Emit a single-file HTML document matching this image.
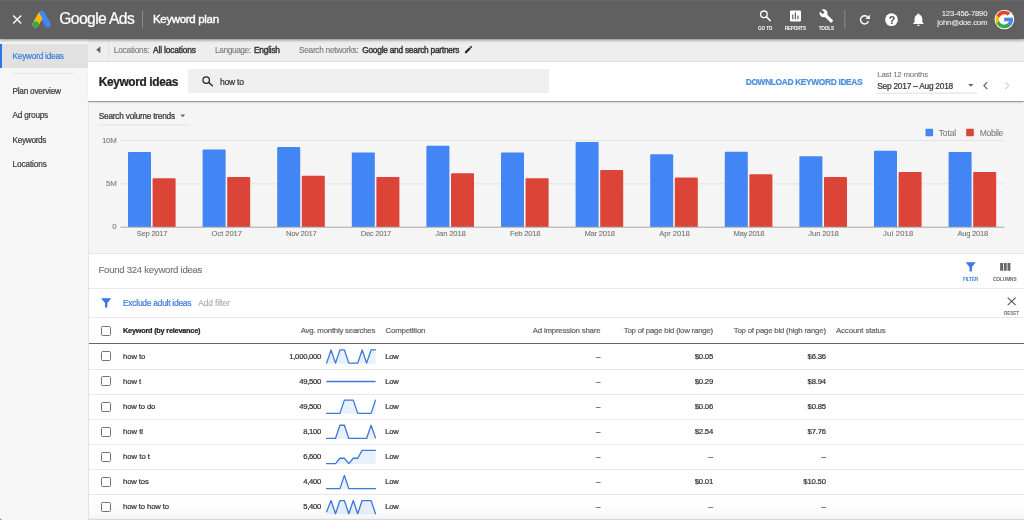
<!DOCTYPE html>
<html lang="en">
<head>
<meta charset="utf-8">
<title>Keyword plan - Google Ads</title>
<style>
*{box-sizing:border-box;margin:0;padding:0}
html,body{width:1024px;height:520px;overflow:hidden;background:#f5f5f5}
body{position:relative;font-family:"Liberation Sans",sans-serif;color:#333}
.abs{position:absolute}
.t{position:absolute;white-space:nowrap;line-height:14px;height:14px;-webkit-text-stroke:.22px currentColor}
#hdr{position:absolute;left:0;top:0;width:1024px;height:39px;background:#606060;border-top:1px solid #676767;box-shadow:0 1px 3px rgba(0,0,0,.45);z-index:5}
#side{position:absolute;left:0;top:39px;width:89px;height:481px;background:#f6f6f6;border-right:1px solid #e7e7e7}
#sel{position:absolute;left:0;top:44px;width:88px;height:24.2px;background:linear-gradient(to right,#2a75e8 0,#2a75e8 2.3px,#e1e1e1 2.3px)}
#sep{position:absolute;left:12.5px;top:73.1px;width:61.5px;height:1px;background:#e6e6e6}
#sub{position:absolute;left:88px;top:39px;width:936px;height:23px;background:#eeeeee;border-bottom:1px solid #e0e0e0}
#subdiv{position:absolute;left:108px;top:39px;width:1px;height:22px;background:#e2e2e2}
#title{position:absolute;left:88px;top:62px;width:936px;height:39px;background:#fff;box-shadow:0 1px 0 rgba(0,0,0,.22),0 2px 2px -1px rgba(0,0,0,.28);z-index:3}
#sbox{position:absolute;left:188px;top:69.25px;width:360.75px;height:23.75px;background:#efefef;z-index:4}
#panel{position:absolute;left:88px;top:252.5px;width:936px;height:268px;background:#fff;border-left:1px solid #e2e2e2;border-top:1px solid #e6e6e6}
.hl{position:absolute;left:89px;width:935px;height:1px;background:#e8e8e8}
.cb{position:absolute;left:101px;width:10.2px;height:10px;border:1.4px solid #737373;border-radius:1.6px;background:#fff}
#fade{position:absolute;left:89px;top:498px;width:935px;height:22px;background:linear-gradient(to bottom,rgba(0,0,0,0) 0%,rgba(0,0,0,.01) 50%,rgba(0,0,0,.03) 88%,rgba(0,0,0,.09) 100%)}
svg{position:absolute;left:0;top:0;overflow:visible}
.z{z-index:6}
</style>
</head>
<body>
<div id="side"></div>
<div id="sel"></div>
<div id="sep"></div>
<div id="sub"></div>
<div id="subdiv"></div>
<div id="title"></div>
<div id="sbox"></div>
<div id="panel"></div>
<div id="hdr"></div>

<!-- table rules -->
<div class="hl" style="top:287.5px"></div>
<div class="hl" style="top:317.1px"></div>
<div class="hl" style="top:342.85px;height:1.15px;background:#666"></div>
<div class="hl" style="top:368.50px"></div>
<div class="hl" style="top:393.60px"></div>
<div class="hl" style="top:418.70px"></div>
<div class="hl" style="top:443.80px"></div>
<div class="hl" style="top:468.90px"></div>
<div class="hl" style="top:494.00px"></div>
<div class="cb" style="top:325.70px"></div>
<div class="cb" style="top:351.35px"></div>
<div class="cb" style="top:376.45px"></div>
<div class="cb" style="top:401.55px"></div>
<div class="cb" style="top:426.65px"></div>
<div class="cb" style="top:451.75px"></div>
<div class="cb" style="top:476.85px"></div>
<div class="cb" style="top:501.95px"></div>

<!-- chart + icons -->
<svg class="z" width="1024" height="520" viewBox="0 0 1024 520">
  <!-- chart grid -->
  <path d="M98 125H189.5" stroke="#e0e0e0" stroke-width="1"/>
  <path d="M120.5 140.6H1004.3M120.5 183.9H1004.3" stroke="#e3e3e3" stroke-width="1"/>
  <path d="M128.00 227.00V153.00q0 -1.0 1.0 -1.0h21.00q1.0 0 1.0 1.0V227.00z" fill="#4285f4"/><path d="M152.60 227.00V179.25q0 -1.0 1.0 -1.0h21.00q1.0 0 1.0 1.0V227.00z" fill="#db4437"/><path d="M202.60 227.00V150.50q0 -1.0 1.0 -1.0h21.00q1.0 0 1.0 1.0V227.00z" fill="#4285f4"/><path d="M227.20 227.00V178.00q0 -1.0 1.0 -1.0h21.00q1.0 0 1.0 1.0V227.00z" fill="#db4437"/><path d="M277.20 227.00V148.00q0 -1.0 1.0 -1.0h21.00q1.0 0 1.0 1.0V227.00z" fill="#4285f4"/><path d="M301.80 227.00V176.75q0 -1.0 1.0 -1.0h21.00q1.0 0 1.0 1.0V227.00z" fill="#db4437"/><path d="M351.80 227.00V153.50q0 -1.0 1.0 -1.0h21.00q1.0 0 1.0 1.0V227.00z" fill="#4285f4"/><path d="M376.40 227.00V178.00q0 -1.0 1.0 -1.0h21.00q1.0 0 1.0 1.0V227.00z" fill="#db4437"/><path d="M426.40 227.00V146.75q0 -1.0 1.0 -1.0h21.00q1.0 0 1.0 1.0V227.00z" fill="#4285f4"/><path d="M451.00 227.00V174.25q0 -1.0 1.0 -1.0h21.00q1.0 0 1.0 1.0V227.00z" fill="#db4437"/><path d="M501.00 227.00V153.50q0 -1.0 1.0 -1.0h21.00q1.0 0 1.0 1.0V227.00z" fill="#4285f4"/><path d="M525.60 227.00V179.25q0 -1.0 1.0 -1.0h21.00q1.0 0 1.0 1.0V227.00z" fill="#db4437"/><path d="M575.60 227.00V143.00q0 -1.0 1.0 -1.0h21.00q1.0 0 1.0 1.0V227.00z" fill="#4285f4"/><path d="M600.20 227.00V171.00q0 -1.0 1.0 -1.0h21.00q1.0 0 1.0 1.0V227.00z" fill="#db4437"/><path d="M650.20 227.00V155.25q0 -1.0 1.0 -1.0h21.00q1.0 0 1.0 1.0V227.00z" fill="#4285f4"/><path d="M674.80 227.00V178.50q0 -1.0 1.0 -1.0h21.00q1.0 0 1.0 1.0V227.00z" fill="#db4437"/><path d="M724.80 227.00V152.75q0 -1.0 1.0 -1.0h21.00q1.0 0 1.0 1.0V227.00z" fill="#4285f4"/><path d="M749.40 227.00V175.25q0 -1.0 1.0 -1.0h21.00q1.0 0 1.0 1.0V227.00z" fill="#db4437"/><path d="M799.40 227.00V157.25q0 -1.0 1.0 -1.0h21.00q1.0 0 1.0 1.0V227.00z" fill="#4285f4"/><path d="M824.00 227.00V178.00q0 -1.0 1.0 -1.0h21.00q1.0 0 1.0 1.0V227.00z" fill="#db4437"/><path d="M874.00 227.00V151.75q0 -1.0 1.0 -1.0h21.00q1.0 0 1.0 1.0V227.00z" fill="#4285f4"/><path d="M898.60 227.00V173.00q0 -1.0 1.0 -1.0h21.00q1.0 0 1.0 1.0V227.00z" fill="#db4437"/><path d="M948.60 227.00V153.00q0 -1.0 1.0 -1.0h21.00q1.0 0 1.0 1.0V227.00z" fill="#4285f4"/><path d="M973.20 227.00V173.00q0 -1.0 1.0 -1.0h21.00q1.0 0 1.0 1.0V227.00z" fill="#db4437"/>
  <path d="M120.5 227.2H1004.3" stroke="#a9a9a9" stroke-width="1"/>
  <!-- legend -->
  <rect x="925.5" y="128.7" width="7.6" height="7.6" rx=".8" fill="#4285f4"/>
  <rect x="966.2" y="128.7" width="7.6" height="7.6" rx=".8" fill="#db4437"/>
  <!-- dropdown arrow (search volume trends) -->
  <path d="M180.4 114.6h4.8l-2.4 2.6z" fill="#666"/>
  <path d="M326.60 363.15 L331.05 349.95 L335.49 363.15 L339.94 349.95 L344.38 349.95 L348.83 363.15 L353.27 363.15 L357.72 363.15 L362.16 349.95 L366.61 363.15 L371.05 349.95 L375.50 349.95 L375.50 363.65 L326.60 363.65Z" fill="#e8f0fb" stroke="none"/><path d="M326.60 363.15 L331.05 349.95 L335.49 363.15 L339.94 349.95 L344.38 349.95 L348.83 363.15 L353.27 363.15 L357.72 363.15 L362.16 349.95 L366.61 363.15 L371.05 349.95 L375.50 349.95" stroke="#3c79d8" stroke-width="1.3" fill="none" stroke-linejoin="round" stroke-linecap="round"/><path d="M326.3 381.50H375.6" stroke="#3c79d8" stroke-width="1.3" fill="none"/><path d="M326.60 413.35 L331.05 413.35 L335.49 413.35 L339.94 413.35 L344.38 400.15 L348.83 400.15 L353.27 400.15 L357.72 413.35 L362.16 413.35 L366.61 413.35 L371.05 413.35 L375.50 400.15 L375.50 413.85 L326.60 413.85Z" fill="#e8f0fb" stroke="none"/><path d="M326.60 413.35 L331.05 413.35 L335.49 413.35 L339.94 413.35 L344.38 400.15 L348.83 400.15 L353.27 400.15 L357.72 413.35 L362.16 413.35 L366.61 413.35 L371.05 413.35 L375.50 400.15" stroke="#3c79d8" stroke-width="1.3" fill="none" stroke-linejoin="round" stroke-linecap="round"/><path d="M326.60 438.45 L331.05 438.45 L335.49 438.45 L339.94 425.25 L344.38 425.25 L348.83 438.45 L353.27 438.45 L357.72 438.45 L362.16 438.45 L366.61 438.45 L371.05 425.25 L375.50 437.79 L375.50 438.95 L326.60 438.95Z" fill="#e8f0fb" stroke="none"/><path d="M326.60 438.45 L331.05 438.45 L335.49 438.45 L339.94 425.25 L344.38 425.25 L348.83 438.45 L353.27 438.45 L357.72 438.45 L362.16 438.45 L366.61 438.45 L371.05 425.25 L375.50 437.79" stroke="#3c79d8" stroke-width="1.3" fill="none" stroke-linejoin="round" stroke-linecap="round"/><path d="M326.60 463.55 L331.05 463.55 L335.49 463.55 L339.94 458.27 L344.38 458.27 L348.83 463.55 L353.27 458.27 L357.72 458.27 L362.16 450.35 L366.61 450.35 L371.05 450.35 L375.50 450.35 L375.50 464.05 L326.60 464.05Z" fill="#e8f0fb" stroke="none"/><path d="M326.60 463.55 L331.05 463.55 L335.49 463.55 L339.94 458.27 L344.38 458.27 L348.83 463.55 L353.27 458.27 L357.72 458.27 L362.16 450.35 L366.61 450.35 L371.05 450.35 L375.50 450.35" stroke="#3c79d8" stroke-width="1.3" fill="none" stroke-linejoin="round" stroke-linecap="round"/><path d="M326.60 488.65 L331.05 488.65 L335.49 488.65 L339.94 488.65 L344.38 475.45 L348.83 488.65 L353.27 488.65 L357.72 488.65 L362.16 488.65 L366.61 488.65 L371.05 488.65 L375.50 488.65 L375.50 489.15 L326.60 489.15Z" fill="#e8f0fb" stroke="none"/><path d="M326.60 488.65 L331.05 488.65 L335.49 488.65 L339.94 488.65 L344.38 475.45 L348.83 488.65 L353.27 488.65 L357.72 488.65 L362.16 488.65 L366.61 488.65 L371.05 488.65 L375.50 488.65" stroke="#3c79d8" stroke-width="1.3" fill="none" stroke-linejoin="round" stroke-linecap="round"/><path d="M326.60 511.77 L331.05 500.55 L335.49 513.75 L339.94 500.55 L344.38 500.55 L348.83 513.75 L353.27 500.55 L357.72 513.75 L362.16 500.55 L366.61 500.55 L371.05 500.55 L375.50 513.75 L375.50 514.25 L326.60 514.25Z" fill="#e8f0fb" stroke="none"/><path d="M326.60 511.77 L331.05 500.55 L335.49 513.75 L339.94 500.55 L344.38 500.55 L348.83 513.75 L353.27 500.55 L357.72 513.75 L362.16 500.55 L366.61 500.55 L371.05 500.55 L375.50 513.75" stroke="#3c79d8" stroke-width="1.3" fill="none" stroke-linejoin="round" stroke-linecap="round"/>

  <!-- header: close X -->
  <path d="M13.2 15.6l8 8M21.2 15.6l-8 8" stroke="#fff" stroke-width="1.4" fill="none"/>
  <!-- Google Ads logo -->
  <g>
    <path d="M38.9 12.2a3.1 3.1 0 0 1 5.4 0l6.1 10.6a3.1 3.1 0 0 1-5.4 3.1l-6.1-10.6a3.1 3.1 0 0 1 0-3.1z" fill="#4285f4"/>
    <path d="M38.9 12.2l3.6 6.2-4.3 7.5a3.1 3.1 0 0 1-5.4-3.1z" fill="#fbbc04"/>
    <circle cx="35.5" cy="24.4" r="3.1" fill="#34a853"/>
  </g>
  <path d="M142.5 10.5V28.8" stroke="#8a8a8a" stroke-width="1"/>
  <!-- GO TO search icon -->
  <circle cx="763.9" cy="14.3" r="3.3" stroke="#fff" stroke-width="1.3" fill="none"/>
  <path d="M766.4 16.8l3.8 3.8" stroke="#fff" stroke-width="1.5" stroke-linecap="round"/>
  <!-- REPORTS icon -->
  <rect x="790" y="10.4" width="11" height="11" rx="1.2" fill="#fff"/>
  <path d="M792.8 14.6v4.6M795.4 12.6v6.6M798 15.6v3.6" stroke="#606060" stroke-width="1.2"/>
  <!-- TOOLS wrench -->
  <path d="M832.9 20.3l-5.6-5.6c.55-1.4.25-3.1-.95-4.25-1.2-1.2-3-1.45-4.5-.75l2.65 2.65-1.85 1.85-2.7-2.65c-.75 1.45-.45 3.25.75 4.5 1.15 1.15 2.85 1.45 4.25.9l5.6 5.6c.25.25.6.25.85 0l1.4-1.4c.3-.25.3-.65.1-.85z" fill="#fff"/>
  <path d="M844.8 10V29" stroke="#8a8a8a" stroke-width="1"/>
  <!-- refresh -->
  <path d="M867.5 16.9a4.1 4.1 0 1 0 .95 4.3" stroke="#fff" stroke-width="1.5" fill="none"/>
  <path d="M869.9 14.7v4.4h-4.4z" fill="#fff"/>
  <!-- help -->
  <circle cx="891.5" cy="19.7" r="6.35" fill="#fff"/>
  <!-- bell -->
  <path d="M918.4 25.9c.7 0 1.25-.55 1.25-1.25h-2.5c0 .7.55 1.25 1.25 1.25zm3.9-3.8v-3.2c0-1.95-1.05-3.6-2.9-4.05v-.45c0-.55-.45-1-1-1s-1 .45-1 1v.45c-1.85.45-2.9 2.1-2.9 4.05v3.2l-1.3 1.3v.65h10.4v-.65z" fill="#fff"/>
  <!-- avatar -->
  <circle cx="1004.4" cy="19.5" r="9.8" fill="#fff"/>
  <g transform="translate(993.75 8.9) scale(.4375)">
    <path d="M43.6 20.1H42V20H24v8h11.3c-1.65 4.65-6.08 8-11.3 8-6.63 0-12-5.37-12-12s5.37-12 12-12c3.06 0 5.84 1.15 7.96 3.04l5.66-5.66C34.05 6.05 29.27 4 24 4 12.96 4 4 12.96 4 24s8.96 20 20 20 20-8.96 20-20c0-1.34-.14-2.65-.4-3.9z" fill="#fbbc05"/>
    <path d="M6.3 14.7l6.57 4.82C14.65 15.1 18.96 12 24 12c3.06 0 5.84 1.15 7.96 3.04l5.66-5.66C34.05 6.05 29.27 4 24 4 16.32 4 9.66 8.34 6.3 14.7z" fill="#ea4335"/>
    <path d="M24 44c5.17 0 9.86-1.98 13.41-5.2l-6.19-5.24C29.21 35.09 26.71 36 24 36c-5.2 0-9.62-3.32-11.28-7.95l-6.52 5.02C9.5 39.56 16.23 44 24 44z" fill="#34a853"/>
    <path d="M43.6 20.1H42V20H24v8h11.3c-.79 2.24-2.23 4.17-4.09 5.57l6.19 5.24C36.97 39.2 44 34 44 24c0-1.34-.14-2.65-.4-3.9z" fill="#4285f4"/>
  </g>

  <!-- sub bar back arrow + pencil -->
  <path d="M100.4 46.3v7l-4.2-3.5z" fill="#666"/>
  <g transform="translate(464.9 53.2) scale(.87) translate(-464.8 -53.15)"><path d="M464.8 51.4v1.75h1.75l5.15-5.15-1.75-1.75zm8.25-4.75a.46.46 0 0 0 0-.66l-1.1-1.1a.46.46 0 0 0-.66 0l-.85.85 1.75 1.75z" fill="#222"/></g>

  <!-- title bar: search icon -->
  <circle cx="206.2" cy="80" r="3.25" stroke="#222" stroke-width="1.25" fill="none"/>
  <path d="M208.7 82.5l3.7 3.2" stroke="#222" stroke-width="1.35" stroke-linecap="round"/>
  <!-- date underline, arrow, chevrons -->
  <path d="M877 93.1H977.5" stroke="#dcdcdc" stroke-width="1"/>
  <path d="M968.2 84.1h5.2l-2.6 2.7z" fill="#606060"/>
  <path d="M987.3 82.2l-3.4 3.4 3.4 3.4" stroke="#606060" stroke-width="1.15" fill="none"/>
  <path d="M1005.4 82.2l3.4 3.4-3.4 3.4" stroke="#cfcfcf" stroke-width="1.15" fill="none"/>

  <!-- filter icons -->
  <path d="M965.6 262.2h10.2l-3.9 4.9v4.5h-2.4v-4.5z" fill="#3b78e7"/>
  <path d="M1000.1 263h2.9v7.7h-2.9zM1003.8 263h2.9v7.7h-2.9zM1007.5 263h2.9v7.7h-2.9z" fill="#666"/>
  <path d="M101.1 298.2h10.2l-3.9 4.9v4.5h-2.4v-4.5z" fill="#3b78e7"/>
  <path d="M1007.7 297.7l7.9 7.5M1015.6 297.7l-7.9 7.5" stroke="#555" stroke-width="1.1" fill="none"/>
</svg>
<div id="fade" class="z"></div><div class="abs z" style="left:0;top:514px;width:6px;height:6px;background:radial-gradient(circle at 0 100%,#858585 0,#999 .8px,rgba(160,160,160,0) 2px)"></div><div class="abs z" style="left:89px;top:519px;width:935px;height:1px;background:rgba(0,0,0,.07)"></div>
<div class="z" style="position:absolute;left:0;top:0;width:1024px;height:520px;pointer-events:none;will-change:transform">
<span class="t" style="left:888.7px;top:13.1px;font-size:10.5px;font-weight:700;color:#606060">?</span>
<span class="t" style="top:11.90px;font-size:15.67px;color:#fff;letter-spacing:-0.600px;left:59.25px;">Google Ads</span>
<span class="t" style="top:12.40px;font-size:11.50px;color:#fff;letter-spacing:-0.329px;-webkit-text-stroke-width:0.4px;left:153.00px;">Keyword plan</span>
<span class="t" style="top:21.80px;font-size:4.72px;color:#fff;font-weight:700;letter-spacing:-0.143px;-webkit-text-stroke-width:0px;left:758.00px;">GO TO</span>
<span class="t" style="top:21.80px;font-size:4.72px;color:#fff;font-weight:700;letter-spacing:-0.222px;-webkit-text-stroke-width:0px;left:784.75px;">REPORTS</span>
<span class="t" style="top:21.80px;font-size:4.72px;color:#fff;font-weight:700;letter-spacing:-0.183px;-webkit-text-stroke-width:0px;left:818.75px;">TOOLS</span>
<span class="t" style="top:7.10px;font-size:7.80px;color:#f1f1f1;letter-spacing:-0.258px;-webkit-text-stroke-width:0.08px;right:36.76px;">123-456-7890</span>
<span class="t" style="top:16.30px;font-size:7.80px;color:#f1f1f1;letter-spacing:-0.217px;-webkit-text-stroke-width:0.08px;right:36.72px;">john@doe.com</span>
<span class="t" style="top:49.80px;font-size:8.25px;color:#3b7ddb;letter-spacing:-0.223px;left:12.50px;">Keyword ideas</span>
<span class="t" style="top:84.70px;font-size:8.25px;color:#3c3c3c;letter-spacing:-0.241px;left:12.50px;">Plan overview</span>
<span class="t" style="top:109.30px;font-size:8.25px;color:#3c3c3c;letter-spacing:-0.237px;left:12.50px;">Ad groups</span>
<span class="t" style="top:133.80px;font-size:8.25px;color:#3c3c3c;letter-spacing:-0.318px;left:12.50px;">Keywords</span>
<span class="t" style="top:158.30px;font-size:8.25px;color:#3c3c3c;letter-spacing:-0.115px;left:12.50px;">Locations</span>
<span class="t" style="top:43.00px;font-size:8.30px;color:#777;letter-spacing:-0.210px;-webkit-text-stroke-width:0.1px;left:113.75px;">Locations:</span>
<span class="t" style="top:43.00px;font-size:8.30px;color:#333;letter-spacing:-0.120px;-webkit-text-stroke-width:0.42px;left:153.00px;">All locations</span>
<span class="t" style="top:43.00px;font-size:8.30px;color:#777;letter-spacing:-0.389px;-webkit-text-stroke-width:0.1px;left:215.00px;">Language:</span>
<span class="t" style="top:43.00px;font-size:8.30px;color:#333;letter-spacing:-0.212px;-webkit-text-stroke-width:0.42px;left:254.00px;">English</span>
<span class="t" style="top:43.00px;font-size:8.30px;color:#777;letter-spacing:-0.291px;-webkit-text-stroke-width:0.1px;left:299.00px;">Search networks:</span>
<span class="t" style="top:43.00px;font-size:8.30px;color:#333;letter-spacing:-0.228px;-webkit-text-stroke-width:0.42px;left:362.25px;">Google and search partners</span>
<span class="t" style="top:75.10px;font-size:11.90px;color:#222;font-weight:700;letter-spacing:-0.366px;left:98.75px;">Keyword ideas</span>
<span class="t" style="top:74.75px;font-size:8.54px;color:#333;letter-spacing:-0.238px;left:220.00px;">how to</span>
<span class="t" style="top:75.00px;font-size:8.33px;color:#4a8fdb;font-weight:700;letter-spacing:-0.318px;left:745.75px;">DOWNLOAD KEYWORD IDEAS</span>
<span class="t" style="top:67.50px;font-size:7.87px;color:#777;letter-spacing:-0.218px;-webkit-text-stroke-width:0.1px;left:877.25px;">Last 12 months</span>
<span class="t" style="top:78.60px;font-size:8.35px;color:#333;letter-spacing:-0.239px;left:877.25px;">Sep 2017 – Aug 2018</span>
<span class="t" style="top:109.00px;font-size:8.30px;color:#333;letter-spacing:-0.228px;left:98.75px;">Search volume trends</span>
<span class="t" style="top:133.60px;font-size:7.90px;color:#777;letter-spacing:-0.290px;-webkit-text-stroke-width:0.08px;right:907.54px;">10M</span>
<span class="t" style="top:176.90px;font-size:7.90px;color:#777;letter-spacing:-0.313px;-webkit-text-stroke-width:0.08px;right:907.56px;">5M</span>
<span class="t" style="top:220.40px;font-size:7.90px;color:#777;letter-spacing:-0.245px;-webkit-text-stroke-width:0.08px;right:907.49px;">0</span>
<span class="t" style="top:125.60px;font-size:8.51px;color:#7a7a7a;letter-spacing:-0.146px;-webkit-text-stroke-width:0.08px;left:938.75px;">Total</span>
<span class="t" style="top:125.60px;font-size:8.51px;color:#7a7a7a;letter-spacing:-0.304px;-webkit-text-stroke-width:0.08px;left:979.75px;">Mobile</span>
<span class="t" style="top:226.80px;font-size:7.63px;color:#707070;letter-spacing:-0.282px;-webkit-text-stroke-width:0.08px;left:102.06px;width:100px;text-align:center;">Sep 2017</span>
<span class="t" style="top:226.80px;font-size:7.63px;color:#707070;letter-spacing:-0.069px;-webkit-text-stroke-width:0.08px;left:176.77px;width:100px;text-align:center;">Oct 2017</span>
<span class="t" style="top:226.80px;font-size:7.63px;color:#707070;letter-spacing:-0.281px;-webkit-text-stroke-width:0.08px;left:251.26px;width:100px;text-align:center;">Nov 2017</span>
<span class="t" style="top:226.80px;font-size:7.63px;color:#707070;letter-spacing:-0.281px;-webkit-text-stroke-width:0.08px;left:325.86px;width:100px;text-align:center;">Dec 2017</span>
<span class="t" style="top:226.80px;font-size:7.63px;color:#707070;letter-spacing:-0.123px;-webkit-text-stroke-width:0.08px;left:400.54px;width:100px;text-align:center;">Jan 2018</span>
<span class="t" style="top:226.80px;font-size:7.63px;color:#707070;letter-spacing:-0.228px;-webkit-text-stroke-width:0.08px;left:475.09px;width:100px;text-align:center;">Feb 2018</span>
<span class="t" style="top:226.80px;font-size:7.63px;color:#707070;letter-spacing:-0.228px;-webkit-text-stroke-width:0.08px;left:549.69px;width:100px;text-align:center;">Mar 2018</span>
<span class="t" style="top:226.80px;font-size:7.63px;color:#707070;letter-spacing:-0.069px;-webkit-text-stroke-width:0.08px;left:624.37px;width:100px;text-align:center;">Apr 2018</span>
<span class="t" style="top:226.80px;font-size:7.63px;color:#707070;letter-spacing:-0.387px;-webkit-text-stroke-width:0.08px;left:698.81px;width:100px;text-align:center;">May 2018</span>
<span class="t" style="top:226.80px;font-size:7.63px;color:#707070;letter-spacing:-0.123px;-webkit-text-stroke-width:0.08px;left:773.54px;width:100px;text-align:center;">Jun 2018</span>
<span class="t" style="top:226.80px;font-size:7.63px;color:#707070;letter-spacing:0.196px;-webkit-text-stroke-width:0.08px;left:848.30px;width:100px;text-align:center;">Jul 2018</span>
<span class="t" style="top:226.80px;font-size:7.63px;color:#707070;letter-spacing:-0.282px;-webkit-text-stroke-width:0.08px;left:922.66px;width:100px;text-align:center;">Aug 2018</span>
<span class="t" style="top:263.20px;font-size:9.61px;color:#707070;letter-spacing:-0.271px;-webkit-text-stroke-width:0.1px;left:98.50px;">Found 324 keyword ideas</span>
<span class="t" style="top:273.20px;font-size:4.77px;color:#4285f4;font-weight:700;letter-spacing:-0.223px;-webkit-text-stroke-width:0px;left:963.00px;">FILTER</span>
<span class="t" style="top:273.20px;font-size:4.77px;color:#666;font-weight:700;letter-spacing:-0.087px;-webkit-text-stroke-width:0px;left:993.00px;">COLUMNS</span>
<span class="t" style="top:296.00px;font-size:8.43px;color:#3b7ddb;letter-spacing:-0.254px;left:123.00px;">Exclude adult ideas</span>
<span class="t" style="top:296.00px;font-size:8.43px;color:#aaa;letter-spacing:-0.157px;-webkit-text-stroke-width:0.1px;left:198.30px;">Add filter</span>
<span class="t" style="top:306.70px;font-size:4.77px;color:#777;font-weight:700;letter-spacing:-0.180px;-webkit-text-stroke-width:0px;left:1004.00px;">RESET</span>
<span class="t" style="top:323.90px;font-size:7.30px;color:#222;font-weight:700;letter-spacing:-0.211px;left:123.00px;">Keyword (by relevance)</span>
<span class="t" style="top:323.90px;font-size:7.83px;color:#666;letter-spacing:-0.225px;right:648.92px;">Avg. monthly searches</span>
<span class="t" style="top:323.90px;font-size:7.83px;color:#666;letter-spacing:-0.187px;left:385.50px;">Competition</span>
<span class="t" style="top:323.90px;font-size:7.83px;color:#666;letter-spacing:-0.202px;right:423.70px;">Ad impression share</span>
<span class="t" style="top:323.90px;font-size:7.83px;color:#666;letter-spacing:-0.209px;right:311.01px;">Top of page bid (low range)</span>
<span class="t" style="top:323.90px;font-size:7.83px;color:#666;letter-spacing:-0.210px;right:198.21px;">Top of page bid (high range)</span>
<span class="t" style="top:323.90px;font-size:7.83px;color:#666;letter-spacing:-0.131px;left:836.00px;">Account status</span>
<span class="t" style="top:349.55px;font-size:7.71px;color:#333;letter-spacing:-0.069px;left:123.00px;">how to</span>
<span class="t" style="top:349.55px;font-size:7.71px;color:#333;letter-spacing:-0.277px;right:702.98px;">1,000,000</span>
<span class="t" style="top:349.55px;font-size:7.71px;color:#333;letter-spacing:-0.314px;left:385.30px;">Low</span>
<span class="t" style="top:349.55px;font-size:7.73px;color:#7a7a7a;-webkit-text-stroke-width:0.35px;right:423.70px;">–</span>
<span class="t" style="top:349.55px;font-size:7.71px;color:#333;letter-spacing:-0.218px;right:311.02px;">$0.05</span>
<span class="t" style="top:349.55px;font-size:7.71px;color:#333;letter-spacing:-0.218px;right:198.22px;">$6.36</span>
<span class="t" style="top:374.65px;font-size:7.71px;color:#333;letter-spacing:-0.085px;left:123.00px;">how t</span>
<span class="t" style="top:374.65px;font-size:7.71px;color:#333;letter-spacing:-0.296px;right:703.00px;">49,500</span>
<span class="t" style="top:374.65px;font-size:7.71px;color:#333;letter-spacing:-0.314px;left:385.30px;">Low</span>
<span class="t" style="top:374.65px;font-size:7.73px;color:#7a7a7a;-webkit-text-stroke-width:0.35px;right:423.70px;">–</span>
<span class="t" style="top:374.65px;font-size:7.71px;color:#333;letter-spacing:-0.218px;right:311.02px;">$0.29</span>
<span class="t" style="top:374.65px;font-size:7.71px;color:#333;letter-spacing:-0.218px;right:198.22px;">$8.94</span>
<span class="t" style="top:399.75px;font-size:7.71px;color:#333;letter-spacing:-0.126px;left:123.00px;">how to do</span>
<span class="t" style="top:399.75px;font-size:7.71px;color:#333;letter-spacing:-0.296px;right:703.00px;">49,500</span>
<span class="t" style="top:399.75px;font-size:7.71px;color:#333;letter-spacing:-0.314px;left:385.30px;">Low</span>
<span class="t" style="top:399.75px;font-size:7.73px;color:#7a7a7a;-webkit-text-stroke-width:0.35px;right:423.70px;">–</span>
<span class="t" style="top:399.75px;font-size:7.71px;color:#333;letter-spacing:-0.218px;right:311.02px;">$0.06</span>
<span class="t" style="top:399.75px;font-size:7.71px;color:#333;letter-spacing:-0.218px;right:198.22px;">$0.85</span>
<span class="t" style="top:424.85px;font-size:7.71px;color:#333;letter-spacing:-0.023px;left:123.00px;">how tl</span>
<span class="t" style="top:424.85px;font-size:7.71px;color:#333;letter-spacing:-0.298px;right:703.00px;">8,100</span>
<span class="t" style="top:424.85px;font-size:7.71px;color:#333;letter-spacing:-0.314px;left:385.30px;">Low</span>
<span class="t" style="top:424.85px;font-size:7.73px;color:#7a7a7a;-webkit-text-stroke-width:0.35px;right:423.70px;">–</span>
<span class="t" style="top:424.85px;font-size:7.71px;color:#333;letter-spacing:-0.218px;right:311.02px;">$2.54</span>
<span class="t" style="top:424.85px;font-size:7.71px;color:#333;letter-spacing:-0.218px;right:198.22px;">$7.76</span>
<span class="t" style="top:449.95px;font-size:7.71px;color:#333;left:123.00px;">how to t</span>
<span class="t" style="top:449.95px;font-size:7.71px;color:#333;letter-spacing:-0.298px;right:703.00px;">6,600</span>
<span class="t" style="top:449.95px;font-size:7.71px;color:#333;letter-spacing:-0.314px;left:385.30px;">Low</span>
<span class="t" style="top:449.95px;font-size:7.73px;color:#7a7a7a;-webkit-text-stroke-width:0.35px;right:423.70px;">–</span>
<span class="t" style="top:449.95px;font-size:8.09px;color:#7a7a7a;-webkit-text-stroke-width:0.35px;right:311.00px;">–</span>
<span class="t" style="top:449.95px;font-size:8.09px;color:#7a7a7a;-webkit-text-stroke-width:0.35px;right:198.00px;">–</span>
<span class="t" style="top:475.05px;font-size:7.71px;color:#333;letter-spacing:-0.124px;left:123.00px;">how tos</span>
<span class="t" style="top:475.05px;font-size:7.71px;color:#333;letter-spacing:-0.298px;right:703.00px;">4,400</span>
<span class="t" style="top:475.05px;font-size:7.71px;color:#333;letter-spacing:-0.314px;left:385.30px;">Low</span>
<span class="t" style="top:475.05px;font-size:7.73px;color:#7a7a7a;-webkit-text-stroke-width:0.35px;right:423.70px;">–</span>
<span class="t" style="top:475.05px;font-size:7.71px;color:#333;letter-spacing:-0.218px;right:311.02px;">$0.01</span>
<span class="t" style="top:475.05px;font-size:7.71px;color:#333;letter-spacing:-0.180px;right:198.18px;">$10.50</span>
<span class="t" style="top:500.15px;font-size:7.71px;color:#333;letter-spacing:-0.121px;left:123.00px;">how to how to</span>
<span class="t" style="top:500.15px;font-size:7.71px;color:#333;letter-spacing:-0.298px;right:703.00px;">5,400</span>
<span class="t" style="top:500.15px;font-size:7.71px;color:#333;letter-spacing:-0.314px;left:385.30px;">Low</span>
<span class="t" style="top:500.15px;font-size:7.73px;color:#7a7a7a;-webkit-text-stroke-width:0.35px;right:423.70px;">–</span>
<span class="t" style="top:500.15px;font-size:8.09px;color:#7a7a7a;-webkit-text-stroke-width:0.35px;right:311.00px;">–</span>
<span class="t" style="top:500.15px;font-size:8.09px;color:#7a7a7a;-webkit-text-stroke-width:0.35px;right:198.00px;">–</span>
</div>
</body>
</html>
